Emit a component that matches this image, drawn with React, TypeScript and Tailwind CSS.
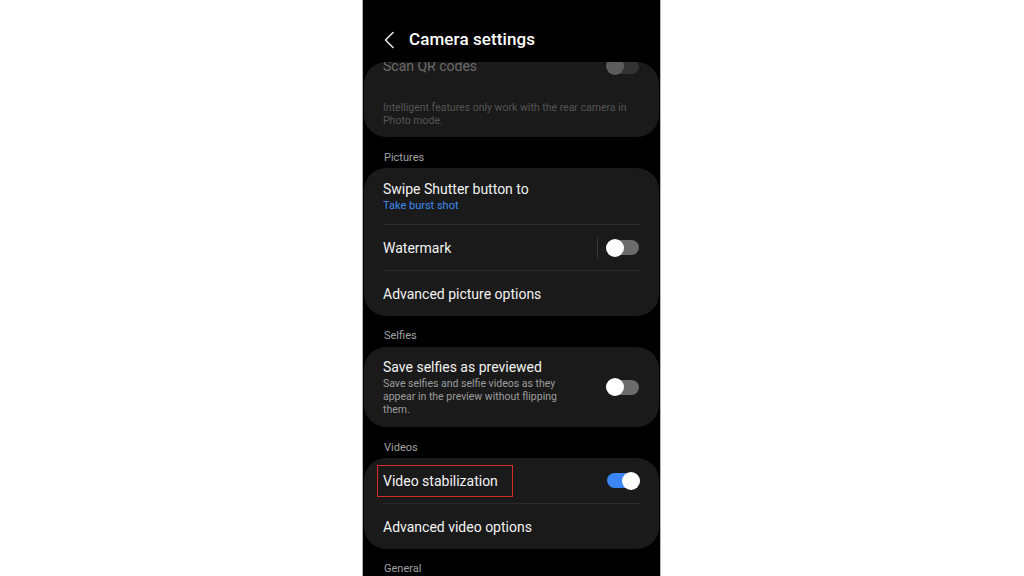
const Toggle = ({ on = false, dim = false }: { on?: boolean; dim?: boolean }) => {
  const track = on ? 'bg-[#3b86f4]' : dim ? 'bg-[#333333]' : 'bg-[#6b6b6b]'
  const thumb = dim ? 'bg-[#5c5c5c]' : 'bg-white'
  return (
    <div className={`relative w-[32px] h-[15px] rounded-full ${track}`}>
      <div
        className={`absolute top-1/2 -translate-y-1/2 w-[18px] h-[18px] rounded-full ${thumb} ${on ? 'right-[-1px]' : 'left-[-1px]'}`}
      />
    </div>
  )
}

const Divider = () => <div className="mx-[19px] h-px bg-[#2c2c2c]" />

const Label = ({ children, pb = 'pb-[5px]' }: { children: string; pb?: string }) => (
  <div className={`h-[31px] flex items-end px-[20px] ${pb}`}>
    <span className="text-[11px] leading-[13px] text-[#a2a2a2]">{children}</span>
  </div>
)

const Row = ({ title, children }: { title: string; children?: React.ReactNode }) => (
  <div className="h-[45px] flex items-center justify-between pl-[19px] pr-[20px]">
    <span className="text-[14px] leading-[18px] text-[#f2f2f2]">{title}</span>
    {children}
  </div>
)

export default function App() {
  return (
    <div className="w-[1024px] h-[576px] bg-white overflow-hidden" style={{ fontFamily: 'Roboto, "Noto Sans", sans-serif' }}>
      <div className="ml-[362px] w-[299px] h-[576px] bg-black border-x border-[#b4b4b4] flex flex-col">
        {/* header */}
        <div className="h-[62px] shrink-0 flex items-center pl-[20px] pt-[18px]">
          <svg width="12" height="18" viewBox="0 0 12 18" className="mr-[14px]">
            <polyline points="10,1.5 2.5,9 10,16.5" fill="none" stroke="#e8e8e8" strokeWidth="1.6" strokeLinecap="round" strokeLinejoin="round" />
          </svg>
          <span className="text-[17px] font-medium text-white tracking-[0.1px]">Camera settings</span>
        </div>

        {/* scrolled list */}
        <div className="flex-1 overflow-hidden rounded-t-[22px] mx-px">
          <div className="mt-[-18px]">
            <div className="bg-[#1a1a1a] rounded-[22px] pb-[10px]">
              <div className="h-[44px] flex items-center justify-between pl-[19px] pr-[20px]">
                <span className="text-[14px] leading-[18px] text-[#6a6a6a]">Scan QR codes</span>
                <Toggle dim />
              </div>
              <p className="mt-[13px] px-[19px] text-[10.5px] leading-[13px] text-[#555555] w-[292px]">
                Intelligent features only work with the rear camera in Photo mode.
              </p>
            </div>

            <Label pb="pb-[4px]">Pictures</Label>
            <div className="bg-[#1a1a1a] rounded-[22px]">
              <div className="h-[56px] flex flex-col justify-center pl-[19px] pr-[20px]">
                <span className="text-[14px] leading-[18px] text-[#f2f2f2]">Swipe Shutter button to</span>
                <span className="text-[11px] leading-[14px] mt-[1px] text-[#3d8af0]">Take burst shot</span>
              </div>
              <Divider />
              <Row title="Watermark">
                <div className="flex items-center">
                  <div className="w-px h-[20px] bg-[#3a3a3a] mr-[9px]" />
                  <Toggle />
                </div>
              </Row>
              <Divider />
              <Row title="Advanced picture options" />
            </div>

            <Label>Selfies</Label>
            <div className="bg-[#1a1a1a] rounded-[22px] h-[80px] flex items-center justify-between pl-[19px] pr-[20px]">
              <div className="flex flex-col">
                <span className="text-[14px] leading-[18px] text-[#f2f2f2]">Save selfies as previewed</span>
                <span className="mt-[1px] text-[10.5px] leading-[13px] text-[#9c9c9c] w-[190px]">
                  Save selfies and selfie videos as they appear in the preview without flipping them.
                </span>
              </div>
              <Toggle />
            </div>

            <Label pb="pb-[4px]">Videos</Label>
            <div className="bg-[#1a1a1a] rounded-[22px]">
              <div className="relative">
                <Row title="Video stabilization">
                  <Toggle on />
                </Row>
                <div className="absolute left-[13px] top-[7px] w-[136px] h-[32px] border border-[#d42a2a]" />
              </div>
              <Divider />
              <Row title="Advanced video options" />
            </div>

            <Label>General</Label>
          </div>
        </div>
      </div>
    </div>
  )
}
